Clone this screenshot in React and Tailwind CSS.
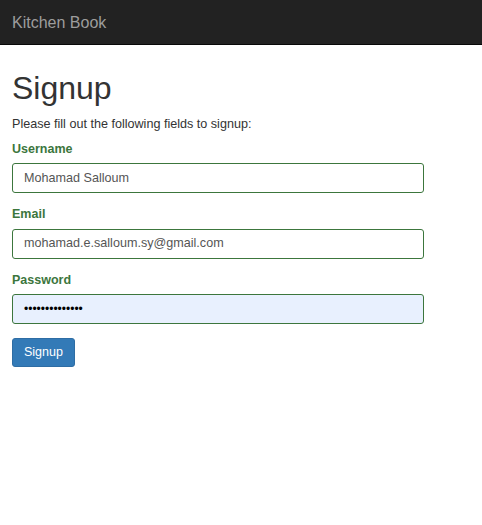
export default function App() {
  const font = { fontFamily: '"Liberation Sans", Arial, sans-serif' };
  return (
    <div className="min-h-[525px] bg-white text-[#333]" style={font}>
      {/* Navbar */}
      <nav className="h-[45px] bg-[#222] border-b border-[#080808] flex items-center px-3 pt-[1px]">
        <span className="text-[16px] text-[#9d9d9d]">Kitchen Book</span>
      </nav>

      {/* Form */}
      <div className="px-3 w-[436px]">
        <h1 className="text-[32px] leading-none mt-[27px] mb-[14px]">Signup</h1>
        <p className="text-[12.6px] leading-none mb-[12px]">Please fill out the following fields to signup:</p>

        <Field label="Username" value="Mohamad Salloum" />
        <Field label="Email" value="mohamad.e.salloum.sy@gmail.com" />
        <Field label="Password" value="••••••••••••••" password />

        <button className="-mt-[1px] h-[29px] px-[11px] text-[12.5px] text-white bg-[#337ab7] border border-[#2e6da4] rounded-[3px]">
          Signup
        </button>
      </div>
    </div>
  );
}

function Field({ label, value, password }) {
  return (
    <div className="mb-[15px]">
      <label className="block text-[12.5px] font-bold text-[#3c763d] leading-none mb-[8px]">{label}</label>
      <div
        className={`h-[30px] flex items-center px-[11px] border border-[#3c763d] rounded-[3px] ${
          password ? "bg-[#e8f0fe] text-black text-[12px]" : "bg-white text-[#555] text-[12.6px]"
        }`}
      >
        {value}
      </div>
    </div>
  );
}
